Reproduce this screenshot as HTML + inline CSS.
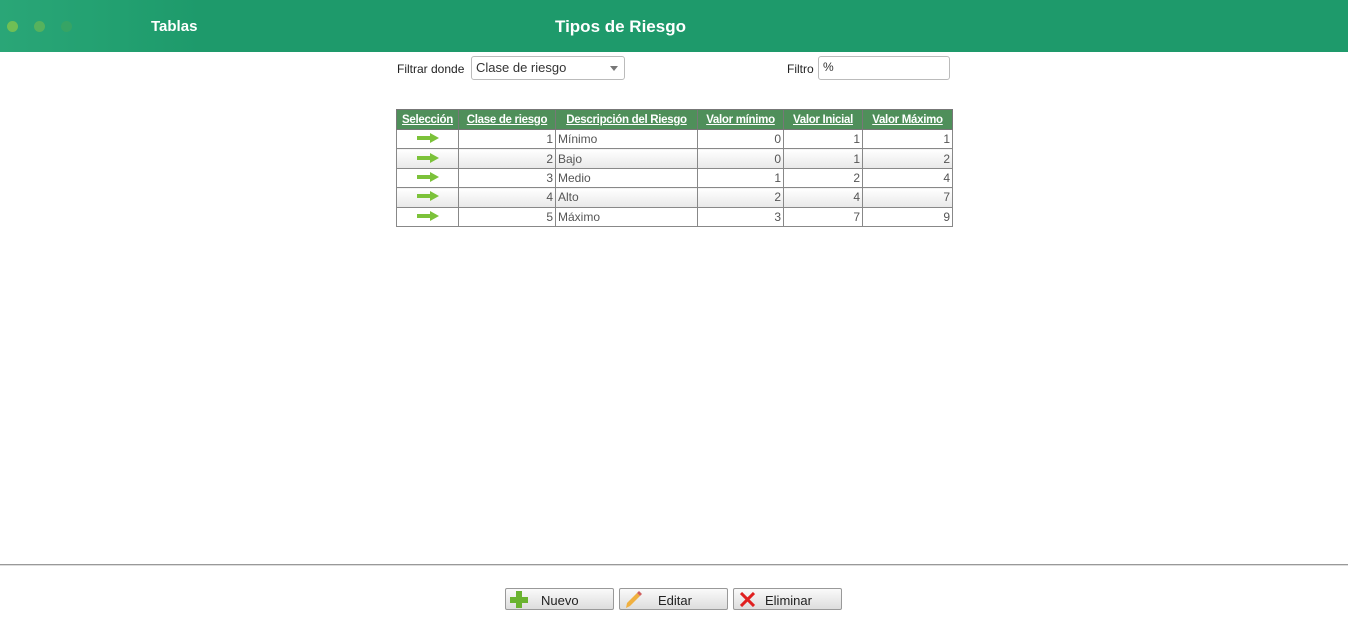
<!DOCTYPE html>
<html><head><meta charset="utf-8"><style>
body{margin:0;width:1348px;height:627px;background:#fff;font-family:"Liberation Sans",sans-serif;position:relative;overflow:hidden}
.hdr{position:absolute;left:0;top:0;width:1348px;height:52px;background:linear-gradient(90deg,#2aa677 0,#22a070 120px,#1e9a6b 200px,#1e9a6b)}
.dot{position:absolute;top:21px;width:11px;height:11px;border-radius:50%}
.t{position:absolute;color:#fff;font-weight:bold}
.lbl{position:absolute;font-size:12px;color:#222}
.box{position:absolute;border:1px solid #bbb;border-radius:3px;background:#fff;font-size:13px;color:#333;box-sizing:border-box;padding:3px 4px}
table{position:absolute;left:396px;top:109px;border-collapse:collapse;font-size:12px;color:#555;table-layout:fixed;width:556px}
th{background:#4f8f5a;color:#fff;text-decoration:underline;font-weight:bold;height:19px;padding:0 1px;border:1px solid #777;white-space:nowrap;overflow:hidden;font-size:11.5px;letter-spacing:-0.3px}
td{border:1px solid #888;height:18.4px;padding:0 2px;white-space:nowrap}
tr.a td{background:linear-gradient(#fff,#e8e8e8)}
.r{text-align:right}
.btn{position:absolute;top:588px;width:109px;height:22px;box-sizing:border-box;border:1px solid #999;border-radius:2px;background:linear-gradient(#fafafa,#ddd);font-size:13px;color:#222}
.btn span{position:absolute;top:4px}
</style></head><body>
<div class="hdr">
<div class="dot" style="left:7px;background:#6fbf55"></div>
<div class="dot" style="left:34px;background:#56b25d"></div>
<div class="dot" style="left:61px;background:#36a465"></div>
<div class="t" style="left:151px;top:18px;font-size:15px">Tablas</div>
<div class="t" style="left:555px;top:17px;font-size:17px">Tipos de Riesgo</div>
</div>
<div class="lbl" style="left:397px;top:62px">Filtrar donde</div>
<div class="box" style="left:471px;top:56px;width:154px;height:24px">Clase de riesgo<span style="position:absolute;right:6px;top:9px;border-left:4px solid transparent;border-right:4px solid transparent;border-top:5px solid #777"></span></div>
<div class="lbl" style="left:787px;top:62px">Filtro</div>
<div class="box" style="left:818px;top:56px;width:132px;height:24px;font-size:12px">%</div>
<table>
<colgroup><col style="width:62px"><col style="width:97px"><col style="width:142px"><col style="width:86px"><col style="width:79px"><col style="width:90px"></colgroup>
<tr><th>Selección</th><th>Clase de riesgo</th><th>Descripción del Riesgo</th><th>Valor mínimo</th><th>Valor Inicial</th><th>Valor Máximo</th></tr>
<tr><td style="text-align:center"><svg width="22" height="10"><path d="M0 3h13V0l9 5-9 5V7H0z" fill="#7cc23a"/></svg></td><td class="r">1</td><td>Mínimo</td><td class="r">0</td><td class="r">1</td><td class="r">1</td></tr>
<tr class="a"><td style="text-align:center"><svg width="22" height="10"><path d="M0 3h13V0l9 5-9 5V7H0z" fill="#7cc23a"/></svg></td><td class="r">2</td><td>Bajo</td><td class="r">0</td><td class="r">1</td><td class="r">2</td></tr>
<tr><td style="text-align:center"><svg width="22" height="10"><path d="M0 3h13V0l9 5-9 5V7H0z" fill="#7cc23a"/></svg></td><td class="r">3</td><td>Medio</td><td class="r">1</td><td class="r">2</td><td class="r">4</td></tr>
<tr class="a"><td style="text-align:center"><svg width="22" height="10"><path d="M0 3h13V0l9 5-9 5V7H0z" fill="#7cc23a"/></svg></td><td class="r">4</td><td>Alto</td><td class="r">2</td><td class="r">4</td><td class="r">7</td></tr>
<tr><td style="text-align:center"><svg width="22" height="10"><path d="M0 3h13V0l9 5-9 5V7H0z" fill="#7cc23a"/></svg></td><td class="r">5</td><td>Máximo</td><td class="r">3</td><td class="r">7</td><td class="r">9</td></tr>
</table>
<div style="position:absolute;left:0;top:564px;width:1348px;height:1px;background:#999"></div>
<div style="position:absolute;left:0;top:565px;width:1348px;height:1px;background:#ddd"></div>
<div class="btn" style="left:505px"><svg style="position:absolute;left:4px;top:2px" width="18" height="17"><path d="M6 0h6v6h6v6h-6v5H6v-5H0V6h6z" fill="#6ab330"/></svg><span style="left:35px">Nuevo</span></div>
<div class="btn" style="left:619px"><svg style="position:absolute;left:4px;top:2px" width="18" height="18"><path d="M2 17l1-5L13 2l3 3L6 15z" fill="#f0b040"/><path d="M13 2l2-2 3 3-2 2z" fill="#d06060"/></svg><span style="left:38px">Editar</span></div>
<div class="btn" style="left:733px"><svg style="position:absolute;left:6px;top:3px" width="15" height="15"><path d="M1 1L14 14M14 1L1 14" stroke="#e02020" stroke-width="3"/></svg><span style="left:31px">Eliminar</span></div>
</body></html>
